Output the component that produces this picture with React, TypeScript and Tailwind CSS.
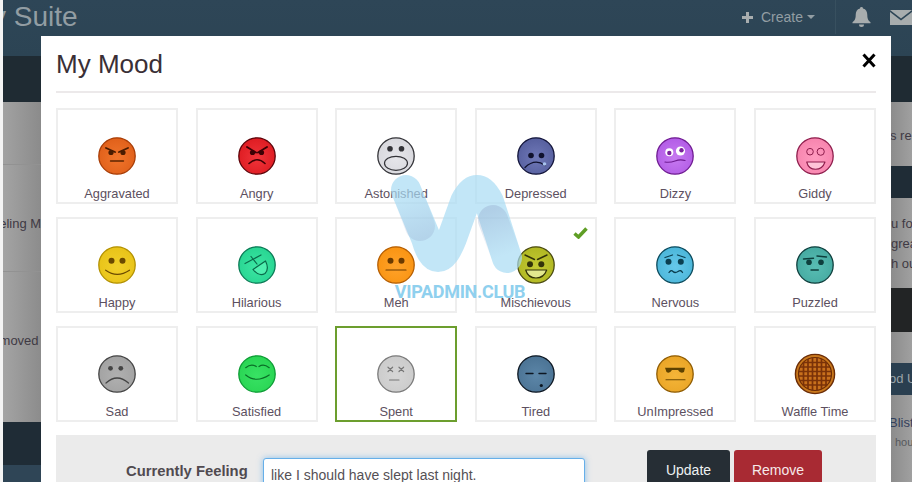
import type { ReactNode } from "react";

const Eyes = ({ l = 13, r = 24.5, y = 15, s = 2.6, c }: { l?: number; r?: number; y?: number; s?: number; c: string }) => (
  <>
    <circle cx={l} cy={y} r={s} fill={c} />
    <circle cx={r} cy={y} r={s} fill={c} />
  </>
);

const Line = ({ d, c, w = 1.3 }: { d: string; c: string; w?: number }) => (
  <path d={d} fill="none" stroke={c} strokeWidth={w} strokeLinecap="round" strokeLinejoin="round" />
);

const Face = ({ id, from, to, edge, children }: { id: string; from: string; to: string; edge: string; children: ReactNode }) => (
  <svg width="38" height="38" viewBox="0 0 38 38" className="shrink-0">
    <defs>
      <radialGradient id={id} cx="50%" cy="55%" r="55%">
        <stop offset="0%" stopColor={from} />
        <stop offset="100%" stopColor={to} />
      </radialGradient>
    </defs>
    <circle cx="19" cy="19" r="18.2" fill={`url(#${id})`} stroke={edge} strokeWidth="1.3" />
    {children}
  </svg>
);

const Waffle = () => {
  const bars = [7, 11.5, 16, 20.5, 25, 29.5];
  return (
    <svg width="42" height="42" viewBox="0 0 42 42" className="shrink-0 -my-[2px]">
      <defs>
        <clipPath id="waffle-clip">
          <circle cx="21" cy="21" r="16.5" />
        </clipPath>
      </defs>
      <circle cx="21" cy="21" r="19.6" fill="#c9791d" stroke="#6b2c06" strokeWidth="1.4" />
      <circle cx="21" cy="21" r="16.5" fill="#c8701c" stroke="#6b2c06" strokeWidth="1.2" />
      <g clipPath="url(#waffle-clip)" stroke="#7a3208" strokeWidth="1.7">
        {bars.map((b) => (
          <g key={b}>
            <line x1={b + 2.5} y1="3" x2={b + 2.5} y2="39" />
            <line x1="3" y1={b + 2.5} x2="39" y2={b + 2.5} />
          </g>
        ))}
      </g>
    </svg>
  );
};

const moods: { name: string; icon: ReactNode; selected?: boolean; checked?: boolean }[] = [
  {
    name: "Aggravated",
    icon: (
      <Face id="f1" from="#f0752c" to="#e0601a" edge="#a83c05">
        <Eyes l={13} r={25} y={15.5} s={2.6} c="#4a1c00" />
        <Line d="M8 11 L17 15 M30 11 L21 15" c="#4a1c00" w={1.9} />
        <Line d="M12.5 24 L25.5 24" c="#5c2500" w={1.4} />
      </Face>
    ),
  },
  {
    name: "Angry",
    icon: (
      <Face id="f2" from="#f0343a" to="#de1c22" edge="#5c0208">
        <Eyes l={14.5} r={23.5} y={15.5} s={2.6} c="#3d0004" />
        <Line d="M9 10 L18 15.5 M29 10 L20 15.5" c="#3d0004" w={1.9} />
        <Line d="M11 26.5 Q19 19 27 26.5" c="#3d0004" w={1.6} />
      </Face>
    ),
  },
  {
    name: "Astonished",
    icon: (
      <Face id="f3" from="#e6e6ea" to="#d8d8dd" edge="#333338">
        <Eyes l={13} r={24.5} y={11.7} s={2.8} c="#333338" />
        <ellipse cx="19" cy="26.3" rx="11.5" ry="7" fill="none" stroke="#333338" strokeWidth="1.2" />
      </Face>
    ),
  },
  {
    name: "Depressed",
    icon: (
      <Face id="f4" from="#7079b8" to="#565f9e" edge="#12143a">
        <Eyes l={14} r={24.5} y={18.5} s={2.8} c="#10122e" />
        <Line d="M8 30.5 Q18 21 28 28.5" c="#10122e" w={1.3} />
        <circle cx="27.5" cy="27" r="1.8" fill="#a9c4ee" />
      </Face>
    ),
  },
  {
    name: "Dizzy",
    icon: (
      <Face id="f5" from="#c77af0" to="#b25ce6" edge="#6f1b92">
        <circle cx="13.3" cy="15.3" r="4" fill="#ffffff" />
        <circle cx="13.3" cy="16" r="2.2" fill="#7a1f9c" />
        <circle cx="24.5" cy="14" r="4.6" fill="#ffffff" />
        <circle cx="25.5" cy="13.3" r="2.2" fill="#7a1f9c" />
        <Line d="M9 25 Q14 25.8 19 24 T29 23.5" c="#6f1b92" w={1.2} />
      </Face>
    ),
  },
  {
    name: "Giddy",
    icon: (
      <Face id="f6" from="#ff9cc0" to="#f784ae" edge="#8e1d4c">
        <circle cx="14" cy="14.7" r="3.3" fill="none" stroke="#8e1d4c" strokeWidth="1" />
        <circle cx="24.7" cy="14.7" r="3.6" fill="none" stroke="#8e1d4c" strokeWidth="1" />
        <path d="M10.7 25 L29 25 Q26.5 32.3 19.5 32.3 Q12.5 32.3 10.7 25 Z" fill="#ffc4d8" stroke="#8e1d4c" strokeWidth="1.1" strokeLinejoin="round" />
      </Face>
    ),
  },
  {
    name: "Happy",
    icon: (
      <Face id="f7" from="#f2d02a" to="#e8c318" edge="#b39100">
        <Eyes l={13.5} r={24.5} y={14.7} s={3} c="#6b4a00" />
        <Line d="M7.7 24.2 Q19 32.4 31.5 24.2" c="#6b4a00" w={1.2} />
      </Face>
    ),
  },
  {
    name: "Hilarious",
    icon: (
      <Face id="f8" from="#3ce6a3" to="#28d592" edge="#0a7a55">
        <Line d="M7 17.5 L23 9 M13 10.5 L19 18" c="#0a6a4a" w={1.2} />
        <path d="M15 23.5 L27.5 15 Q31.5 23 27 27.5 Q21 31 15 23.5 Z" fill="#4ff0b0" stroke="#0a6a4a" strokeWidth="1.2" strokeLinejoin="round" />
      </Face>
    ),
  },
  {
    name: "Meh",
    icon: (
      <Face id="f9" from="#ffa22a" to="#f99412" edge="#b55d00">
        <Eyes l={13.5} r={24.5} y={14.7} s={3} c="#6b3a00" />
        <Line d="M9 24 L29 24" c="#6b3a00" w={1.2} />
      </Face>
    ),
  },
  {
    name: "Mischievous",
    checked: true,
    icon: (
      <Face id="f10" from="#c4ca34" to="#b0b722" edge="#4a4a10">
        <Line d="M8 9 L17.5 13.5 M30 9 L20.5 13.5" c="#33330a" w={1.4} />
        <Eyes l={13} r={24.3} y={18.3} s={3} c="#33330a" />
        <path d="M8.7 24 L29.7 24 Q27 32 19 32 Q11 32 8.7 24 Z" fill="#e3e88f" stroke="#33330a" strokeWidth="1.2" strokeLinejoin="round" />
      </Face>
    ),
  },
  {
    name: "Nervous",
    icon: (
      <Face id="f11" from="#66c8ea" to="#4bb6d9" edge="#0b4a5c">
        <Line d="M9 11.5 L16.5 9 M21.5 9 L29 11.5" c="#0b3f50" w={1.3} />
        <Eyes l={12.5} r={24.8} y={15.8} s={3} c="#0b3f50" />
        <Line d="M13 26.5 Q15 23.5 17 25.5 T22 25.5 T26.5 26.5" c="#0b3f50" w={1.3} />
      </Face>
    ),
  },
  {
    name: "Puzzled",
    icon: (
      <Face id="f12" from="#58bdb3" to="#46aaa1" edge="#0e3f3d">
        <Line d="M7.5 13 L17.5 12.3 M21 10 L30.5 11" c="#0e3f3d" w={1.4} />
        <Eyes l={13} r={25} y={16.2} s={2.8} c="#0e3f3d" />
        <Line d="M15 24 L22.3 24" c="#0e3f3d" w={1.4} />
      </Face>
    ),
  },
  {
    name: "Sad",
    icon: (
      <Face id="f13" from="#b0b0b0" to="#a2a2a2" edge="#444444">
        <Eyes l={12.5} r={22.8} y={13.3} s={2.4} c="#444444" />
        <Line d="M8 28 Q19 18 30.5 28" c="#444444" w={1.2} />
      </Face>
    ),
  },
  {
    name: "Satisfied",
    icon: (
      <Face id="f14" from="#38e264" to="#29d553" edge="#0c9c34">
        <Line d="M7.7 12.7 Q13 8.3 18.3 11.5 M21 11.5 Q25.7 8.3 31.2 12.7" c="#0a6e27" w={1.2} />
        <Line d="M7.7 20 Q18 28.5 31.2 20" c="#0a6e27" w={1.2} />
      </Face>
    ),
  },
  {
    name: "Spent",
    icon: (
      <Face id="f15" from="#d6d6d6" to="#cbcbcb" edge="#7a7a7a">
        <Line d="M11 12.2 L15.6 16.5 M15.6 12.2 L11 16.5 M22 12.2 L26.6 16.5 M26.6 12.2 L22 16.5" c="#777777" w={1.2} />
        <Line d="M12.5 25 L22 25" c="#777777" w={1.1} />
      </Face>
    ),
    selected: true,
  },
  {
    name: "Tired",
    icon: (
      <Face id="f16" from="#5c86a8" to="#4b7394" edge="#0d1722">
        <Line d="M9 18.5 L16 18.5 M22 18.5 L29 18.5" c="#0d1722" w={1.4} />
        <circle cx="24.3" cy="30.5" r="1.6" fill="#0d1722" />
      </Face>
    ),
  },
  {
    name: "UnImpressed",
    icon: (
      <Face id="f17" from="#f4b539" to="#eaa526" edge="#8f5b00">
        <path d="M9 12.7 L29 12.7 L28 17 Q24.5 19 22 15 L16 15 Q13.5 19 10.5 17 Z" fill="#5e4200" />
        <Line d="M10 24.7 L29 24.7" c="#6b4800" w={1.1} />
      </Face>
    ),
  },
  { name: "Waffle Time", icon: <Waffle /> },
];

const Band = ({ className, children }: { className: string; children?: ReactNode }) => (
  <div className={`flex items-center overflow-hidden whitespace-nowrap text-[13px] text-[#3f3a44] ${className}`}>{children}</div>
);

export default function App() {
  return (
    <div className="relative flex h-[482px] w-[912px] overflow-hidden bg-white font-['Liberation_Sans',Arial,sans-serif]">
      {/* page behind the modal */}
      <div className="w-[3px] shrink-0 bg-[#f4f4f4]" />
      <div className="flex min-w-0 flex-1 flex-col overflow-hidden">
        <nav className="flex h-14 shrink-0 items-start bg-gradient-to-b from-[#2e4657] to-[#2c4454]">
          <span className="ml-[-11px] mt-0 whitespace-nowrap text-[28px] leading-[34px] text-[#929da3]">y Suite</span>
          <div className="ml-auto flex h-[34px] items-center text-[#929da3]">
            <svg width="11" height="11" viewBox="0 0 11 11" fill="#a8adae">
              <path d="M4 0h3v4h4v3H7v4H4V7H0V4h4z" />
            </svg>
            <span className="ml-2 text-[14px]">Create</span>
            <span className="ml-1 h-0 w-0 border-x-[4px] border-t-[4px] border-x-transparent border-t-[#929da3]" />
            <span className="ml-5 h-[34px] w-px bg-[#38505f]" />
            <svg className="ml-4" width="19" height="20" viewBox="0 0 19 20" fill="#a8adae">
              <path d="M9.5 0a1.5 1.5 0 0 1 1.5 1.6c3 .7 4.3 3.2 4.3 6.4 0 4 1 5.3 3.2 7.3v1H.5v-1C2.700 13.300 3.700 12 3.700 8c0-3.200 1.300-5.700 4.300-6.400A1.500 1.500 0 0 1 9.500 0zM7 17.500h5a2.500 2.500 0 0 1-5 0z" />
            </svg>
            <svg className="ml-[19px] shrink-0" width="22" height="15" viewBox="0 0 22 15" fill="#a8adae">
              <path d="M0 0h22L11 8.500z" />
              <path d="M0 2v13h22V2L11 10.500z" />
            </svg>
          </div>
        </nav>
        <div className="flex min-h-0 flex-1">
          <div className="flex w-[38px] shrink-0 flex-col">
            <Band className="h-[46px] bg-[#1f2b33]" />
            <Band className="h-[63px] border-b border-[#929292] bg-gradient-to-r from-[#a2a2a2] to-[#8b8b8b]" />
            <Band className="h-[107px] items-start border-b border-[#929292] bg-gradient-to-r from-[#a4a4a4] to-[#8c8c8c] pt-[49px]">
              <span className="ml-[-19px]">Feeling M</span>
            </Band>
            <Band className="h-[150px] items-start bg-gradient-to-r from-[#a4a4a4] to-[#8c8c8c] pt-[59px]">
              <span className="ml-[-15px]">removed</span>
            </Band>
            <Band className="h-[43px] bg-[#1f2c36]" />
            <Band className="flex-1 bg-[#2f4556]" />
          </div>
          <div className="flex-1" />
          <div className="flex w-[21px] shrink-0 flex-col">
            <Band className="h-[46px] bg-[#1f2b33]" />
            <Band className="h-[64px] bg-gradient-to-r from-[#8c8c8c] to-[#a0a0a0] pt-[3px]">
              <span className="ml-[-1px]">s re</span>
            </Band>
            <Band className="h-[32px] bg-[#1f2c36]" />
            <Band className="h-[90px] flex-col items-start bg-gradient-to-r from-[#8c8c8c] to-[#a0a0a0] pt-[16px] leading-[20px]">
              <span>u for</span>
              <span>grea</span>
              <span>h ou</span>
            </Band>
            <Band className="h-[44px] bg-[#222425]" />
            <Band className="h-[31px] bg-gradient-to-r from-[#8c8c8c] to-[#a0a0a0]" />
            <Band className="h-[32px] bg-[#2a3f50] text-[#9aa3a8]">
              <span className="ml-[-2px]">od U</span>
            </Band>
            <Band className="flex-1 flex-col items-start bg-gradient-to-r from-[#8c8c8c] to-[#a0a0a0] pt-[18px] leading-[20px]">
              <span className="ml-[-2px] text-[#33405c]">Blist</span>
              <span className="ml-[4px] mt-[-1px] text-[11px] text-[#55585c]">hou</span>
            </Band>
          </div>
        </div>
      </div>

      {/* modal */}
      <div className="absolute left-[41px] top-[36px] w-[850px] bg-white px-[15px]">
        <div className="flex h-[57px] items-center justify-between border-b-2 border-[#ece9ea]">
          <h2 className="mt-[1px] text-[26px] text-[#3a2f36]">My Mood</h2>
          <svg width="14" height="15" viewBox="0 0 14 15" className="mt-[-6px]">
            <path d="M1.500 1.500 L12.500 13.500 M12.500 1.500 L1.500 13.500" stroke="#000000" strokeWidth="3" />
          </svg>
        </div>
        <div className="mt-[15px] grid grid-cols-6 gap-x-[17.6px] gap-y-[13px]">
          {moods.map((m) => (
            <div
              key={m.name}
              className={`relative flex h-[96px] flex-col items-center border-2 pt-[27px] ${m.selected ? "border-[#6c9e2e]" : "border-[#eeeeee]"}`}
            >
              {m.icon}
              <span className="mt-[9px] text-[12.8px] leading-5 text-[#5c5060]">{m.name}</span>
              {m.checked && (
                <svg className="absolute right-[7px] top-[8px]" width="15" height="12" viewBox="0 0 15 12">
                  <path d="M1.500 6.500 L5.500 10 L13.500 1.500" fill="none" stroke="#5f9e25" strokeWidth="3.500" />
                </svg>
              )}
            </div>
          ))}
        </div>
        <div className="mt-[13px] flex h-[60px] items-start bg-[#ebebeb] pl-[70px]">
          <span className="mt-[27px] w-[122px] whitespace-nowrap text-[14.8px] font-bold leading-[18px] text-[#504a50]">Currently Feeling</span>
          <input
            readOnly
            value="like I should have slept last night."
            className="ml-[15px] mt-[23px] h-[34px] w-[322px] rounded-[3px] border border-[#66afe9] bg-white px-[7px] text-[14px] text-[#555055] shadow-[0_0_6px_rgba(102,175,233,0.7)] outline-none"
          />
          <button className="ml-[62px] mt-[15px] h-10 w-[83px] rounded-[3px] bg-[#262e35] text-[14px] text-[#eef1f2]">Update</button>
          <button className="ml-1 mt-[15px] h-10 w-[88px] rounded-[3px] bg-[#a82a33] text-[14px] text-[#f6e9ea]">Remove</button>
        </div>
      </div>

      {/* watermark */}
      <div className="pointer-events-none absolute left-[380px] top-[170px] flex w-[160px] flex-col items-center">
        <svg width="160" height="112" viewBox="0 0 160 112">
          <defs>
            <linearGradient id="wm-left" gradientUnits="userSpaceOnUse" x1="28" y1="25" x2="44" y2="68">
              <stop offset="0%" stopColor="#93a9cc" stopOpacity="0" />
              <stop offset="100%" stopColor="#93a9cc" stopOpacity="0.3" />
            </linearGradient>
            <linearGradient id="wm-right" gradientUnits="userSpaceOnUse" x1="110" y1="40" x2="126" y2="85">
              <stop offset="0%" stopColor="#93a9cc" stopOpacity="0.38" />
              <stop offset="100%" stopColor="#93a9cc" stopOpacity="0" />
            </linearGradient>
          </defs>
          <g opacity="0.7">
            <path d="M26 20 L46 68 Q57 106 72 68 L85 32 Q97 8 109 32 L127 88" fill="none" stroke="#a8dcf4" strokeWidth="30" strokeLinecap="round" strokeLinejoin="round" />
          </g>
          <path d="M26 20 L40 56" fill="none" stroke="url(#wm-left)" strokeWidth="30" strokeLinecap="round" />
          <path d="M113 50 L127 88" fill="none" stroke="url(#wm-right)" strokeWidth="30" strokeLinecap="round" />
        </svg>
        <span className="whitespace-nowrap font-['Roboto',sans-serif] text-[18px] font-bold leading-5 tracking-[-0.3px] text-[#8fd0ee]">VIPADMIN.CLUB</span>
      </div>
    </div>
  );
}
